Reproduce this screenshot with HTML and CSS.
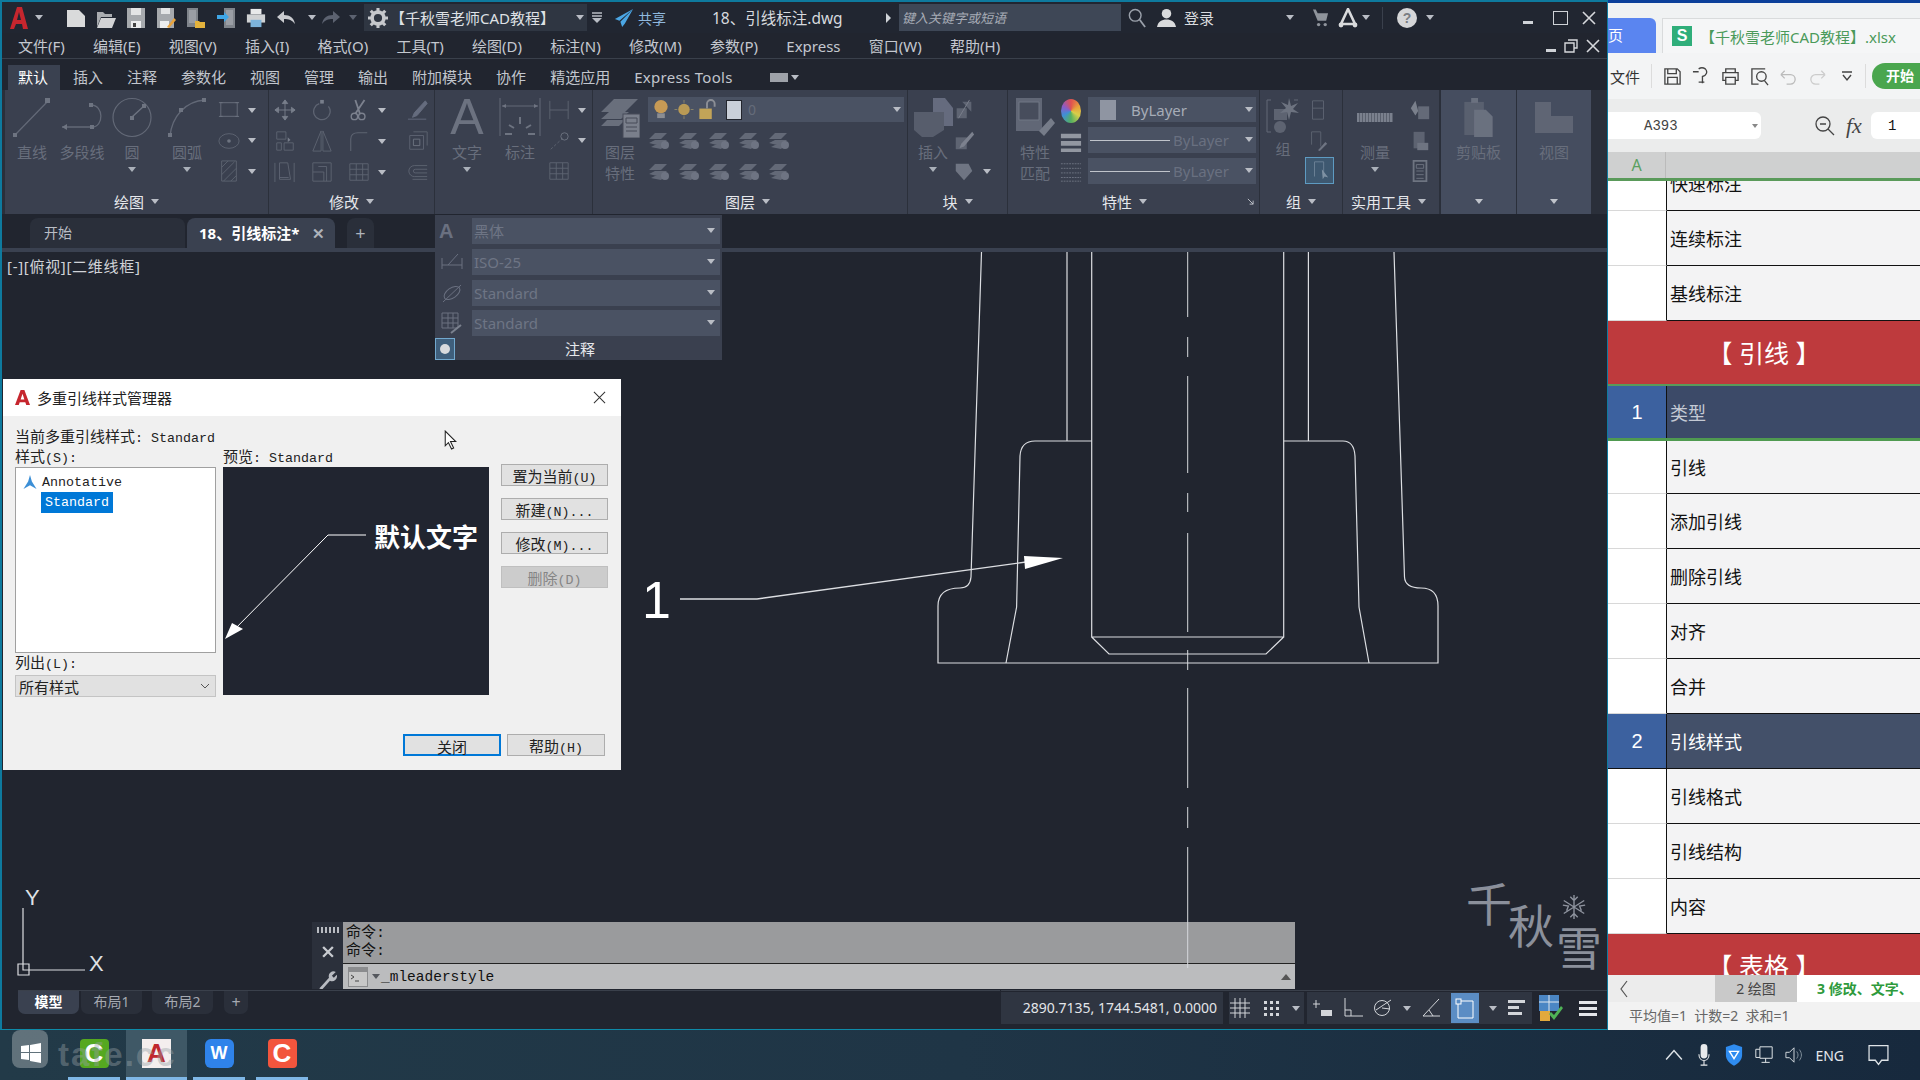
FILE: index.html
```html
<!DOCTYPE html>
<html lang="zh-CN">
<head>
<meta charset="utf-8">
<title>AutoCAD</title>
<link rel="stylesheet" href="styles.css">
</head>
<body>
<svg class="defs" width="0" height="0">
  <symbol id="lay" viewBox="0 0 24 24"><path d="M2 12 8 6h12l-6 6zM2 16l6-3h12l-6 6zM4 20l4-2h10l-4 4z" fill="#6e7482"/><circle cx="18" cy="18" r="4" fill="#7c8290"/></symbol>
  <symbol id="grid" viewBox="0 0 24 24"><path d="M2 3h20v18H2zM2 9h20M2 15h20M9 3v18M16 3v18" fill="none" stroke="#676d7b"/></symbol>
  <symbol id="rect" viewBox="0 0 24 24"><path d="M3 4h18v15H3z" fill="none" stroke="#676d7b" stroke-width="1.3"/><path d="M1 4h4M19 4h4M1 19h4M19 19h4" stroke="#7b818e"/></symbol>
</svg>
<div class="screen">
  <div class="windows">
    <section class="cad">
      <header class="titlebar">
        <svg class="i20 logo" viewBox="0 0 20 24"><path d="M1 23 8 1h5l6 22h-5l-1-5H7l-2 5zM8 14h4l-2-8z" fill="#c6262e"/></svg>
        <i class="caret c-a"></i>
        <svg class="i20 qfirst" viewBox="0 0 20 22"><path d="M1 3h12l6 6v11H1z" fill="#d9dadb"/></svg>
        <svg class="i20 q" viewBox="0 0 20 22"><path d="M1 5h6l2 2h7v3H5l-4 10z" fill="#a9acb0"/><path d="M5 11h15l-4 10H1z" fill="#d2d3d5"/></svg>
        <svg class="i20 q" viewBox="0 0 20 22"><path d="M1 1h18v20H1z" fill="#a6a9ad"/><path d="M5 1h10v7H5z" fill="#e3e4e5"/><path d="M5 14h10v7H5z" fill="#ecedee"/><path d="M7 16h3v4H7z" fill="#444"/></svg>
        <svg class="i20 q" viewBox="0 0 20 22"><path d="M1 1h17v20H1z" fill="#a6a9ad"/><path d="M5 1h9v6H5z" fill="#e3e4e5"/><path d="M4 14h9v7H4z" fill="#ecedee"/><path d="m11 20 7-9 2 2-7 8z" fill="#e8a33c"/></svg>
        <svg class="i20 q" viewBox="0 0 20 22"><path d="M1 1h11v19H1z" fill="#7f848b"/><path d="M3 3h7v13H3z" fill="#9a9ea5"/><path d="M9 14h4l1 1h5v6H9z" fill="#e3b23c"/></svg>
        <svg class="i20 q" viewBox="0 0 20 22"><path d="M8 1h11v20H8z" fill="#7f848b"/><path d="M10 3h7v15h-7z" fill="#9a9ea5"/><path d="M1 8h7V5l5 5-5 5v-3H1z" fill="#3fa6e6"/></svg>
        <svg class="i20 q" viewBox="0 0 22 22"><path d="M5 1h12v6H5z" fill="#e8e9ea"/><path d="M1 7h20v9H1z" fill="#cfd1d3"/><path d="M5 13h12v8H5z" fill="#7db3da"/></svg>
        <svg class="i20 q" viewBox="0 0 20 14"><path d="M1 6 8 0v4c6 0 10 3 11 9-3-4-6-5-11-5v4z" fill="#c9cbcf"/></svg>
        <i class="caret c-b"></i>
        <svg class="i20 redo" viewBox="0 0 20 14"><path d="M19 6 12 0v4C6 4 2 7 1 13c3-4 6-5 11-5v4z" fill="#5c6270"/></svg>
        <i class="caret c-c dim"></i>
        <div class="workspace">
          <svg class="gear" viewBox="0 0 22 22"><circle cx="11" cy="11" r="6.5" fill="none" stroke="#c6c8cc" stroke-width="4"/><path d="M11 0v5M11 17v5M0 11h5M17 11h5M3 3l3 3M16 16l3 3M3 19l3-3M16 6l3-3" stroke="#c6c8cc" stroke-width="3.4"/></svg>
          <span class="ws-text">【千秋雪老师CAD教程】</span>
          <i class="caret ws-caret"></i>
        </div>
        <svg class="eqcaret" viewBox="0 0 10 12"><path d="M0 1h10M0 4h10" stroke="#b8bcc4" stroke-width="1.4"/><path d="M0 6h10L5 11z" fill="#b8bcc4"/></svg>
        <svg class="share" viewBox="0 0 22 22"><path d="M21 1 1 12l5 2zM21 1 7 15l2 6 3-4z" fill="#4ba6e4"/></svg>
        <span class="share-text">共享</span>
        <span class="doc-title">18、引线标注.dwg</span>
        <i class="tri-right"></i>
        <div class="search"><em>键入关键字或短语</em></div>
        <svg class="mag" viewBox="0 0 20 22"><circle cx="8" cy="8" r="6.5" fill="none" stroke="#9aa0aa" stroke-width="1.6"/><path d="m13 13 6 8" stroke="#9aa0aa" stroke-width="2"/></svg>
        <svg class="person" viewBox="0 0 20 20"><circle cx="10" cy="6" r="5" fill="#d9dadc"/><path d="M0 20c1-6 5-8 10-8s9 2 10 8z" fill="#d9dadc"/></svg>
        <span class="login">登录</span>
        <i class="caret c-d"></i>
        <svg class="cart" viewBox="0 0 18 20"><path d="M1 1h3l2 4h11l-2 8H6z" fill="#8f949c"/><circle cx="7" cy="17" r="1.8" fill="#8f949c"/><circle cx="14" cy="17" r="1.8" fill="#8f949c"/></svg>
        <svg class="a360" viewBox="0 0 20 20"><path d="M10 1 3 16h14zM10 1v3" fill="none" stroke="#d9dadc" stroke-width="2.6"/><circle cx="3" cy="17" r="2.4" fill="#d9dadc"/><circle cx="17" cy="17" r="2.4" fill="#d9dadc"/></svg>
        <i class="caret c-e"></i>
        <i class="vsep"></i>
        <svg class="help" viewBox="0 0 20 20"><circle cx="10" cy="10" r="10" fill="#d5d6d8"/><text x="10" y="15" text-anchor="middle" class="help-q">?</text></svg>
        <i class="caret c-f"></i>
        <div class="winbtns">
          <i class="w-min"></i><i class="w-max"></i>
          <svg class="w-x" viewBox="0 0 14 14"><path d="m1 1 12 12M13 1 1 13" stroke="#d6d8dc" stroke-width="1.6"/></svg>
        </div>
      </header>

      <nav class="menubar">
        <span>文件(F)</span><span>编辑(E)</span><span>视图(V)</span><span>插入(I)</span><span>格式(O)</span><span>工具(T)</span><span>绘图(D)</span><span>标注(N)</span><span>修改(M)</span><span>参数(P)</span><span>Express</span><span>窗口(W)</span><span>帮助(H)</span>
        <div class="docbtns">
          <i class="w-min"></i>
          <svg class="w-res" viewBox="0 0 14 14"><path d="M4 1h9v8h-3M1 4h9v9H1z" fill="none" stroke="#d6d8dc" stroke-width="1.4"/></svg>
          <svg class="w-x" viewBox="0 0 14 14"><path d="m1 1 12 12M13 1 1 13" stroke="#d6d8dc" stroke-width="1.6"/></svg>
        </div>
      </nav>

      <nav class="ribbon-tabs">
        <span class="rtab active">默认</span><span class="rtab">插入</span><span class="rtab">注释</span><span class="rtab">参数化</span><span class="rtab">视图</span><span class="rtab">管理</span><span class="rtab">输出</span><span class="rtab">附加模块</span><span class="rtab">协作</span><span class="rtab">精选应用</span><span class="rtab">Express Tools</span>
        <span class="rtab-ext"><i></i><i class="caret"></i></span>
      </nav>

      <div class="ribbon">
        <div class="panel p-draw">
          <div class="pbody">
            <div class="tool w40"><svg class="big" viewBox="0 0 40 41"><path d="M3 38 36 4" stroke="#6d7381" stroke-width="1.3"/><rect x="33" y="1" width="5" height="5" fill="#7b818e"/><rect x="1" y="36" width="4" height="4" fill="#7b818e"/></svg><span class="tl">直线</span></div>
            <div class="tool w44 gap8"><svg class="big" viewBox="0 0 44 41"><path d="M2 30h30c12 0 12-22-1-22" fill="none" stroke="#6d7381" stroke-width="1.3"/><path d="m2 30 5-3v6z" fill="#7b818e"/><rect x="29" y="6" width="4" height="4" fill="#7b818e"/><rect x="30" y="28" width="4" height="4" fill="#7b818e"/></svg><span class="tl">多段线</span></div>
            <div class="tool w40 gap8"><svg class="big" viewBox="0 0 40 41"><circle cx="20" cy="20.500" r="19" fill="none" stroke="#6d7381" stroke-width="1.2"/><path d="M20 20 32 9" stroke="#7b818e" stroke-width="1.4"/><rect x="18" y="19" width="4" height="4" fill="#7b818e"/><rect x="30" y="7" width="4" height="4" fill="#7b818e"/></svg><span class="tl">圆</span><i class="caret tcar"></i></div>
            <div class="tool w40 gap15"><svg class="big" viewBox="0 0 40 41"><path d="M3 39C5 20 18 4 38 3" fill="none" stroke="#6d7381" stroke-width="1.3"/><rect x="1" y="36" width="4" height="4" fill="#7b818e"/><rect x="12" y="11" width="4" height="4" fill="#7b818e"/><rect x="35" y="1" width="4" height="4" fill="#7b818e"/></svg><span class="tl">圆弧</span><i class="caret tcar"></i></div>
            <div class="small-col gap11">
              <div class="srow"><svg class="sm" viewBox="0 0 24 24"><use href="#rect"/></svg><i class="caret"></i></div>
              <div class="srow"><svg class="sm" viewBox="0 0 24 24"><ellipse cx="12" cy="12" rx="11" ry="8" fill="none" stroke="#676d7b"/><circle cx="12" cy="12" r="2" fill="#7b818e"/></svg><i class="caret"></i></div>
              <div class="srow"><svg class="sm" viewBox="0 0 24 24"><path d="M4 1v22h16V1zM4 8l7-7M4 16 18 2M6 23 20 9M14 23l6-6" fill="none" stroke="#676d7b"/></svg><i class="caret"></i></div>
            </div>
          </div>
          <div class="plabel">绘图<i class="caret"></i></div>
        </div>

        <div class="panel p-mod">
          <div class="pbody">
            <div class="mod-grid">
              <svg class="sm" viewBox="0 0 24 24"><path d="M12 1v22M1 12h22M12 1 9 5h6zM12 23l-3-4h6zM1 12l4-3v6zM23 12l-4-3v6z" fill="#888e9a" stroke="#888e9a"/></svg>
              <svg class="sm" viewBox="0 0 24 24"><path d="M9 5a9 9 0 1 0 10 3" fill="none" stroke="#676d7b" stroke-width="1.4"/><rect x="10" y="1" width="4" height="4" fill="#888e9a"/></svg>
              <span class="mrow"><svg class="sm" viewBox="0 0 24 24"><path d="M8 1l5 15M18 1 8 16" stroke="#8d929e" stroke-width="2"/><circle cx="7" cy="19" r="3.500" fill="none" stroke="#8d929e" stroke-width="1.5"/><circle cx="15" cy="19" r="3.500" fill="none" stroke="#8d929e" stroke-width="1.5"/></svg><i class="caret"></i></span>
              <svg class="sm" viewBox="0 0 24 24"><path d="M20 2 8 15l-2 5 5-2L22 5zM1 22h20" fill="#70778a" stroke="#70778a"/></svg>
              <svg class="sm" viewBox="0 0 24 24"><path d="M3 2h10v8H3zM11 14h10v8H11zM3 14h5v8H3z" fill="none" stroke="#676d7b"/><path d="m15 8 3 3-3 2z" fill="#888e9a"/></svg>
              <svg class="sm" viewBox="0 0 24 24"><path d="M11 1v22H2zM13 1v22h9z" fill="none" stroke="#676d7b"/></svg>
              <span class="mrow"><svg class="sm" viewBox="0 0 24 24"><path d="M3 23V10Q3 3 11 3h10" fill="none" stroke="#676d7b" stroke-width="1.2"/></svg><i class="caret"></i></span>
              <svg class="sm" viewBox="0 0 24 24"><path d="M3 6h15v15H3zM7 2h15v15" fill="none" stroke="#676d7b"/><path d="M7 10h7v7H7z" fill="none" stroke="#7b818e"/></svg>
              <svg class="sm" viewBox="0 0 24 24"><path d="M1 2v21M22 2v21M6 2h9l3 18H6zM6 18h10" fill="none" stroke="#676d7b"/></svg>
              <svg class="sm" viewBox="0 0 24 24"><path d="M2 2h20v20H2zM2 12h12v10M8 6h9v16" fill="none" stroke="#676d7b"/></svg>
              <span class="mrow"><svg class="sm" viewBox="0 0 24 24"><use href="#grid"/></svg><i class="caret"></i></span>
              <svg class="sm" viewBox="0 0 24 24"><path d="M22 5H8a5 5 0 0 0 0 12h14M22 9H9a2 2 0 0 0 0 4h13M22 20H6" fill="none" stroke="#676d7b"/></svg>
            </div>
          </div>
          <div class="plabel">修改<i class="caret"></i></div>
        </div>

        <div class="panel p-ann">
          <div class="pbody">
            <div class="tool w34 gap-a"><span class="big-a">A</span><span class="tl">文字</span><i class="caret tcar"></i></div>
            <div class="tool w42 gap-b"><svg class="big" viewBox="0 0 42 41"><path d="M1 1v38M41 1v38M3 9h36" fill="none" stroke="#6d7381"/><path d="M3 9l4-2v4zM39 9l-4-2v4z" fill="#7b818e"/><path d="M21 20v7M10 28l5 3M32 28l-5 3M6 37h7M29 37h7" stroke="#7b818e" stroke-width="2"/></svg><span class="tl">标注</span></div>
            <div class="small-col gap7">
              <div class="srow"><svg class="sm" viewBox="0 0 24 24"><path d="M2 2v20M22 2v20M2 12h20" stroke="#676d7b" fill="none"/></svg><i class="caret"></i></div>
              <div class="srow"><svg class="sm" viewBox="0 0 24 24"><path d="M3 21 16 9" stroke="#676d7b" stroke-dasharray="3 2"/><circle cx="18" cy="7" r="4" fill="none" stroke="#7b818e"/></svg><i class="caret"></i></div>
              <div class="srow"><svg class="sm" viewBox="0 0 24 24"><use href="#grid"/></svg></div>
            </div>
          </div>
        </div>

        <div class="panel p-lay">
          <div class="pbody">
            <div class="tool w40 gap7"><svg class="big" viewBox="0 0 40 41"><path d="M1 15 14 2h24L25 15zM1 22l8-7h20l-8 7zM1 29l6-6h18l-6 6z" fill="#757b88"/><rect x="23" y="17" width="17" height="24" fill="#8a8f9a" stroke="#4a4f5b"/><path d="M26 21h11v5H26zM26 30h11M26 34h11" fill="none" stroke="#4a4f5b"/></svg><span class="tl">图层</span><span class="tl tl2">特性</span></div>
            <div class="lay-main">
              <div class="combo layer-combo">
                <svg class="lay-i" viewBox="0 0 20 22"><circle cx="10" cy="8" r="7" fill="#c79a55"/><path d="M6 15h8v5H6z" fill="#8b8d93"/></svg>
                <svg class="lay-i" viewBox="0 0 20 22"><circle cx="10" cy="11" r="6" fill="#b99a55"/><path d="M0 11h3M17 11h3M10 1v3M10 18v3" stroke="#8c8468"/></svg>
                <svg class="lay-i" viewBox="0 0 20 22"><path d="M2 10h13v11H2z" fill="#c2a458"/><path d="M10 10V5a4 4 0 0 1 8 0v3" fill="none" stroke="#8c8f96" stroke-width="2"/></svg>
                <i class="swatch"></i>
                <span class="zero">0</span>
                <i class="caret combo-car"></i>
              </div>
              <div class="lay-row">
                <svg class="lay-s" viewBox="0 0 24 24"><use href="#lay"/></svg><svg class="lay-s" viewBox="0 0 24 24"><use href="#lay"/></svg><svg class="lay-s" viewBox="0 0 24 24"><use href="#lay"/></svg><svg class="lay-s" viewBox="0 0 24 24"><use href="#lay"/></svg><svg class="lay-s" viewBox="0 0 24 24"><use href="#lay"/></svg>
              </div>
              <div class="lay-row">
                <svg class="lay-s" viewBox="0 0 24 24"><use href="#lay"/></svg><svg class="lay-s" viewBox="0 0 24 24"><use href="#lay"/></svg><svg class="lay-s" viewBox="0 0 24 24"><use href="#lay"/></svg><svg class="lay-s" viewBox="0 0 24 24"><use href="#lay"/></svg><svg class="lay-s" viewBox="0 0 24 24"><use href="#lay"/></svg>
              </div>
            </div>
          </div>
          <div class="plabel pl-lay">图层<i class="caret"></i></div>
        </div>

        <div class="panel p-blk">
          <div class="pbody">
            <div class="tool w40 gap5"><svg class="big" viewBox="0 0 40 41"><path d="M20 1h12l8 10v18H20z" fill="#70768a"/><path d="M1 15h30v18l-11 7H9L1 33z" fill="#5f6574"/></svg><span class="tl">插入</span><i class="caret tcar"></i></div>
            <div class="small-col gap7">
              <div class="srow"><svg class="sm" viewBox="0 0 24 24"><path d="M4 10h11v11H4zM10 3h10v11" fill="#676d7b"/><path d="M18 1 6 21" stroke="#8d929e"/></svg></div>
              <div class="srow"><svg class="sm" viewBox="0 0 24 24"><path d="M3 8h12v13H3z" fill="#676d7b"/><path d="M21 2 9 15l-2 5 5-2L23 5z" fill="#8d929e"/></svg></div>
              <div class="srow"><svg class="sm" viewBox="0 0 24 24"><path d="M3 4h14l4 8-9 10-9-10z" fill="#7d8390"/></svg><i class="caret"></i></div>
            </div>
          </div>
          <div class="plabel">块<i class="caret"></i></div>
        </div>

        <div class="panel p-prop">
          <div class="pbody">
            <div class="tool w40 gap7"><svg class="big" viewBox="0 0 40 41"><path d="M1 1h26v33H1z" fill="#6b7180"/><path d="M4 5h20v18H4z" fill="#4b5160" stroke="#7f8592"/><path d="m24 34 12-13 4 5-11 13z" fill="#858b98"/></svg><span class="tl">特性</span><span class="tl tl2">匹配</span></div>
            <div class="wheels">
              <i class="wheel"></i>
              <svg class="sm" viewBox="0 0 24 24"><path d="M1 3h22v5H1zM1 11h22v5H1zM1 19h22v4H1z" fill="#a8adb6"/></svg>
              <svg class="sm" viewBox="0 0 24 24"><path d="M1 3h22M1 8h22M1 13h22M1 18h22M1 22h22" stroke="#7d8390" stroke-dasharray="2 1"/></svg>
            </div>
            <div class="prop-combos">
              <div class="combo c25"><i class="swatch sw-gray"></i><span class="bylayer lit">ByLayer</span><i class="caret combo-car"></i></div>
              <div class="combo c26"><i class="pline"></i><span class="bylayer">ByLayer</span><i class="caret combo-car"></i></div>
              <div class="combo c26"><i class="pline"></i><span class="bylayer">ByLayer</span><i class="caret combo-car"></i></div>
            </div>
          </div>
          <div class="plabel pl-prop">特性<i class="caret"></i><svg class="launch" viewBox="0 0 8 8"><path d="M1 1l6 6M7 3v4H3" stroke="#c8ccd2" fill="none"/></svg></div>
        </div>

        <div class="panel p-grp">
          <div class="pbody">
            <div class="tool w34 gap6"><svg class="big grpi" viewBox="0 0 34 38"><path d="M5 3H1v32h4M28 3h4" fill="none" stroke="#6d7381"/><path d="M8 12h13v11H8z" fill="#666c7a"/><path d="M23 1l2 8 7-3-5 6 6 4-8-1-2 8-2-8-7 1 6-5-5-6 7 3z" fill="#7a808d"/><circle cx="14" cy="30" r="6" fill="#666c7a"/></svg><span class="tl">组</span></div>
            <div class="small-col gap2">
              <div class="srow"><svg class="sm" viewBox="0 0 24 24"><path d="M6 2h12v20H6zM6 10h12" fill="none" stroke="#676d7b"/></svg></div>
              <div class="srow"><svg class="sm" viewBox="0 0 24 24"><path d="M5 2h10v16M5 2v14" fill="none" stroke="#676d7b"/><path d="m12 22 8-9 2 2-8 8z" fill="#7d8390"/></svg></div>
              <div class="srow grp-active"><svg class="sm" viewBox="0 0 24 24"><path d="M6 2h10v16M6 2v16" fill="none" stroke="#7a8ea2"/><path d="m14 10 1 11 2-3 4 1z" fill="#8fa0b0"/></svg></div>
            </div>
          </div>
          <div class="plabel">组<i class="caret"></i></div>
        </div>

        <div class="panel p-utl">
          <div class="pbody">
            <div class="tool w40 gap13"><i class="ruler"></i><span class="tl tl-ruler">测量</span><i class="caret tcar"></i></div>
            <div class="small-col gap16">
              <div class="srow"><svg class="sm" viewBox="0 0 24 24"><path d="M10 8h12v14H10z" fill="#6f7583"/><path d="m7 2-5 8 5 8 3-5z" fill="#8a909c"/></svg></div>
              <div class="srow"><svg class="sm" viewBox="0 0 24 24"><path d="M5 2h12v18H5z" fill="#666c7a"/><path d="M9 14h12v8H9z" fill="#7b818e"/></svg></div>
              <div class="srow"><svg class="sm" viewBox="0 0 24 24"><path d="M5 1h14v22H5z" fill="none" stroke="#7b818e" stroke-width="2"/><path d="M8 5h8v4H8zM8 12h8M8 16h8M8 20h8" stroke="#7b818e" fill="none"/></svg></div>
            </div>
          </div>
          <div class="plabel pl-utl">实用工具<i class="caret"></i></div>
        </div>

        <div class="panel p-clip lit-panel">
          <div class="pbody center">
            <div class="tool"><svg class="big clipi" viewBox="0 0 32 42"><path d="M2 5h20v34H2z" fill="#5f6574"/><path d="M9 1h7v5H9z" fill="#747a88"/><path d="M12 13h12l7 7v21H12z" fill="#747a88"/></svg><span class="tl">剪贴板</span></div>
          </div>
          <div class="plabel"><i class="caret solo"></i></div>
        </div>
        <div class="panel p-view lit-panel">
          <div class="pbody center">
            <div class="tool"><svg class="big viewi" viewBox="0 0 40 32"><path d="M1 1h16v14h22v17H1z" fill="#666c7a"/></svg><span class="tl tl-view">视图</span></div>
          </div>
          <div class="plabel"><i class="caret solo"></i></div>
        </div>
      </div>

      <div class="filetabs">
        <span class="ftab">开始</span>
        <span class="ftab current">18、引线标注*<b>✕</b></span>
        <span class="ftab plus">+</span>
      </div>

      <div class="popout">
        <div class="pop-row"><span class="pop-ic pop-a">A</span><div class="pop-box">黑体<i class="caret"></i></div></div>
        <div class="pop-row"><svg class="pop-ic" viewBox="0 0 22 22"><path d="M1 7v11M21 7v11M1 14h20M17 3 7 14" stroke="#6a7080" fill="none"/></svg><div class="pop-box">ISO-25<i class="caret"></i></div></div>
        <div class="pop-row"><svg class="pop-ic" viewBox="0 0 22 22"><ellipse cx="11" cy="11" rx="9" ry="5" fill="none" stroke="#6a7080" transform="rotate(-35 11 11)"/><path d="M2 20 20 3" stroke="#6a7080"/></svg><div class="pop-box">Standard<i class="caret"></i></div></div>
        <div class="pop-row"><svg class="pop-ic" viewBox="0 0 22 22"><path d="M1 1h16v15H1zM1 6h16M1 11h16M7 1v15M12 1v15" stroke="#6a7080" fill="none"/><path d="m10 21 10-8" stroke="#7b818e" stroke-width="2"/></svg><div class="pop-box">Standard<i class="caret"></i></div></div>
        <div class="pop-foot"><span class="pin"><i></i></span><span class="pop-label">注释</span></div>
      </div>

      <main class="canvas">
        <div class="viewlabel">[-][俯视][二维线框]</div>

        <div class="cmd">
          <div class="cmd-grip">
            <i class="dots"></i>
            <svg class="cmd-x" viewBox="0 0 12 12"><path d="m1 1 10 10M11 1 1 11" stroke="#c8cbd0" stroke-width="2.4"/></svg>
            <svg class="cmd-w" viewBox="0 0 20 20"><path d="M1 19 11 8a5 5 0 0 1 7-6l-4 4 2 2 3-3a5 5 0 0 1-7 6L4 20z" fill="#b8bbc1"/></svg>
          </div>
          <div class="cmd-main">
            <div class="cmd-log"><div>命令:</div><div>命令:</div></div>
            <div class="cmd-input">
              <svg class="cmd-ic" viewBox="0 0 20 20"><path d="M0 0h20v20H0z" fill="#8b8c8e"/><path d="M1 5h18v14H1z" fill="#c8c8c8"/><path d="m3 8 3 2-3 2M7 14h4" stroke="#444" fill="none"/></svg>
              <i class="caret cmd-car"></i>
              <span>_mleaderstyle</span>
              <i class="cmd-up"></i>
            </div>
          </div>
        </div>

        <svg class="drawing" viewBox="0 0 1608 1030">
          <g fill="none" stroke="#dcdee2" stroke-width="1.2">
            <path d="M981.500 252 971 577Q970 588 960 588 938 588 938 606V663H1438V606Q1438 588 1421 588 1405 588 1404.500 577L1394 252"/>
            <path d="M1091.700 441H1035Q1021 441 1020 456L1016.600 607 1006 663"/>
            <path d="M1283.700 441H1343Q1354 441 1355 456L1359 607 1369 663"/>
            <path d="M1091.700 252V637H1283.700V252M1091.700 637 1109 654H1266L1283.700 637M1067 252V441M1308.400 252V441"/>
            <path d="M1187.700 252V317M1187.700 337V357M1187.700 376V473M1187.700 493V512M1187.700 533V632M1187.700 650V670M1187.700 688V788M1187.700 807V828M1187.700 847V968" stroke="#d6d8dc" stroke-width="1"/>
            <path d="M680 599H757L1026 562" stroke-width="1.4"/>
            <path d="M23 908V970H85M18 964H29V975H18z"/>
          </g>
          <path d="M1024 556 1063 558 1025 569z" fill="#fff"/>
          <text x="642" y="618" class="draw-one">1</text>
          <text x="25" y="905" class="ucs">Y</text>
          <text x="89" y="971" class="ucs">X</text>
        </svg>

        <div class="watermark">
          <span>千</span><span>秋</span><span>雪</span>
          <svg class="flake" viewBox="0 0 28 28"><path d="M14 1v26M3 7l22 14M25 7 3 21M10 3l4 4 4-4M10 25l4-4 4 4M2 12l6 1-2 5M26 12l-6 1 2 5" stroke="#8e939e" stroke-width="1.5" fill="none"/></svg>
        </div>

        <div class="dialog">
          <div class="dlg-title">
            <svg class="dlg-logo" viewBox="0 0 16 16"><path d="M0 16 6 0h4l6 16h-4l-1-3H5l-1 3zM6 10h4L8 4z" fill="#c6262e"/></svg>
            <span class="dlg-name">多重引线样式管理器</span>
            <svg class="dlg-x" viewBox="0 0 14 14"><path d="m1 1 12 12M13 1 1 13" stroke="#333" stroke-width="1.1"/></svg>
          </div>
          <div class="dlg-body">
            <div class="dlg-current"><span class="cn">当前多重引线样式</span>: Standard</div>
            <div class="dlg-main">
              <div class="dlg-left">
                <div class="dlg-cap"><span class="cn">样式</span>(S):</div>
                <div class="listbox">
                  <div class="li"><svg class="anno" viewBox="0 0 14 16"><path d="M7 0 9 7l5 8-7-4-7 4 5-8z" fill="#3c8fd6"/></svg><span>Annotative</span></div>
                  <div class="li sel"><span>Standard</span></div>
                </div>
                <div class="dlg-cap cap-list"><span class="cn">列出</span>(L):</div>
                <div class="select"><span class="cn">所有样式</span><svg class="chev" viewBox="0 0 10 6"><path d="m1 1 4 4 4-4" fill="none" stroke="#555"/></svg></div>
              </div>
              <div class="dlg-mid">
                <div class="dlg-cap"><span class="cn">预览</span>: Standard</div>
                <div class="preview">
                  <svg class="pv-svg" viewBox="0 0 266 228"><path d="M143 68H105L3 171" fill="none" stroke="#fff" stroke-width="1"/><path d="M2 172 9 156 20 162z" fill="#fff"/></svg>
                  <span class="pv-text">默认文字</span>
                </div>
              </div>
              <div class="dlg-right">
                <button class="btn"><span class="cn">置为当前</span>(U)</button>
                <button class="btn"><span class="cn">新建</span>(N)...</button>
                <button class="btn"><span class="cn">修改</span>(M)...</button>
                <button class="btn off"><span class="cn">删除</span>(D)</button>
              </div>
            </div>
            <div class="dlg-foot">
              <button class="btn2 primary"><span class="cn">关闭</span></button>
              <button class="btn2"><span class="cn">帮助</span>(H)</button>
            </div>
          </div>
        </div>

        <svg class="cursor" viewBox="0 0 12 19"><path d="M1 1v14l3-3 3 6 2-1-3-6h5z" fill="#fff" stroke="#222" stroke-width="1"/></svg>
      </main>

      <footer class="bottombar">
        <div class="layouts">
          <span class="ltab on">模型</span><span class="ltab">布局1</span><span class="ltab">布局2</span><span class="ltab add">+</span>
        </div>
        <div class="status">
          <span class="coords">2890.7135, 1744.5481, 0.0000</span>
          <div class="sgroup sg1">
            <svg class="st" viewBox="0 0 20 20"><path d="M5 0v20M10 0v20M15 0v20M0 5h20M0 10h20M0 15h20" stroke="#d3d6da"/></svg>
            <svg class="st" viewBox="0 0 20 20"><path d="M3 3h3v3H3zM9 3h3v3H9zM15 3h3v3h-3zM3 9h3v3H3zM9 9h3v3H9zM15 9h3v3h-3zM3 15h3v3H3zM9 15h3v3H9zM15 15h3v3h-3z" fill="#d3d6da"/></svg>
            <i class="caret"></i>
          </div>
          <div class="sgroup sg2">
            <svg class="st" viewBox="0 0 20 20"><path d="M3 2v8M0 6h7" stroke="#d3d6da"/><path d="M8 12h11v6H8z" fill="#d3d6da"/></svg>
            <svg class="st" viewBox="0 0 20 20"><path d="M2 0v18h18M2 12h6v6" fill="none" stroke="#d3d6da"/></svg>
            <svg class="st" viewBox="0 0 20 20"><circle cx="9" cy="10" r="7.500" fill="none" stroke="#d3d6da"/><path d="M3 12 18 2M9 10l8 1" stroke="#d3d6da"/></svg>
            <i class="caret"></i>
            <svg class="st" viewBox="0 0 20 20"><path d="M18 1 2 18h17M8 12l4 6" fill="none" stroke="#d3d6da"/></svg>
            <span class="st-active"><svg class="st" viewBox="0 0 20 24"><path d="M3 5h15v17H3z" fill="none" stroke="#fff"/><rect x="1" y="3" width="5" height="5" fill="#5b8dc4" stroke="#fff"/></svg></span>
            <i class="caret"></i>
            <svg class="st" viewBox="0 0 20 20"><path d="M1 2h17v3H1zM1 8h11v3H1zM1 14h14v3H1z" fill="#d3d6da"/></svg>
          </div>
          <svg class="st globe" viewBox="0 0 26 30"><path d="M1 2h20v16H1z" fill="#4b86c4"/><path d="M11 2v26M1 9h20" stroke="#dfe6ee"/><path d="M2 18h10v10H2z" fill="#e2a93c"/><path d="m11 21 5 6 9-12-2-2-7 9-3-3z" fill="#4fb256"/></svg>
          <svg class="st st-menu" viewBox="0 0 20 20"><path d="M1 3h18v3H1zM1 9h18v3H1zM1 15h18v3H1z" fill="#e4e6ea"/></svg>
        </div>
      </footer>
    </section>

    <section class="sheet">
      <div class="x-tabs">
        <span class="x-home">页</span>
        <div class="x-file">
          <span class="x-s">S</span>
          <span class="x-name">【千秋雪老师CAD教程】.xlsx</span>
        </div>
      </div>
      <div class="x-tools">
        <span class="x-filemenu">文件</span>
        <i class="x-sep"></i>
        <svg class="x-ic" viewBox="0 0 20 20"><path d="M2 2h13l3 3v13H2zM5 2v5h9V2M5 18v-7h10v7" fill="none" stroke="#444" stroke-width="1.4"/></svg>
        <svg class="x-ic" viewBox="0 0 20 20"><path d="M1 5h6M7 2a6 6 0 0 1 7 0c3 3 1 7-3 8v7M7 16h6" fill="none" stroke="#444" stroke-width="1.4"/></svg>
        <svg class="x-ic" viewBox="0 0 20 20"><path d="M5 6V2h10v4M5 14H2V6h16v8h-3M5 11h10v7H5z" fill="none" stroke="#444" stroke-width="1.4"/></svg>
        <svg class="x-ic" viewBox="0 0 20 20"><path d="M16 2H2v16h7" fill="none" stroke="#444" stroke-width="1.4"/><circle cx="12" cy="10" r="5" fill="none" stroke="#444" stroke-width="1.4"/><path d="m15 14 4 5" stroke="#444" stroke-width="1.4"/></svg>
        <svg class="x-ic" viewBox="0 0 20 20"><path d="M2 8h10a5 5 0 0 1 0 10H8M2 8l4-4M2 8l4 4" fill="none" stroke="#bbb" stroke-width="1.4"/></svg>
        <svg class="x-ic" viewBox="0 0 20 20"><path d="M18 8H8a5 5 0 0 0 0 10h4M18 8l-4-4M18 8l-4 4" fill="none" stroke="#ccc" stroke-width="1.4"/></svg>
        <svg class="x-down" viewBox="0 0 12 12"><path d="M1 2h10M2 5l4 5 4-5" fill="none" stroke="#444" stroke-width="1.4"/></svg>
        <i class="x-sep sep2"></i>
        <span class="x-start">开始</span>
      </div>
      <div class="x-formula">
        <div class="x-namebox"><span>A393</span><i></i></div>
        <svg class="x-zoom" viewBox="0 0 20 20"><circle cx="8" cy="8" r="7" fill="none" stroke="#444" stroke-width="1.3"/><path d="M5 8h6M13 13l6 6" stroke="#444" stroke-width="1.3"/></svg>
        <em class="x-fx">fx</em>
        <div class="x-input">1</div>
      </div>
      <div class="x-colhead"><span>A</span></div>
      <div class="x-rows">
        <div class="xrow xrow-top"><i></i><span>快速标注</span></div>
        <div class="xrow"><i></i><span>连续标注</span></div>
        <div class="xrow"><i></i><span>基线标注</span></div>
        <div class="xred">【&nbsp;引线&nbsp;】</div>
        <div class="xrow navy type"><i>1</i><span>类型</span></div>
        <div class="xrow short"><i></i><span>引线</span></div>
        <div class="xrow"><i></i><span>添加引线</span></div>
        <div class="xrow"><i></i><span>删除引线</span></div>
        <div class="xrow"><i></i><span>对齐</span></div>
        <div class="xrow"><i></i><span>合并</span></div>
        <div class="xrow navy"><i>2</i><span>引线样式</span></div>
        <div class="xrow"><i></i><span>引线格式</span></div>
        <div class="xrow"><i></i><span>引线结构</span></div>
        <div class="xrow"><i></i><span>内容</span></div>
        <div class="xred">【&nbsp;表格&nbsp;】</div>
      </div>
      <div class="x-sheets">
        <svg class="x-back" viewBox="0 0 10 18"><path d="M8 1 2 9l6 8" fill="none" stroke="#555" stroke-width="1.2"/></svg>
        <span class="x-st t2">2 绘图</span>
        <span class="x-st t3">3 修改、文字、</span>
      </div>
      <div class="x-status">平均值=1&nbsp; 计数=2&nbsp; 求和=1</div>
    </section>
  </div>

  <footer class="taskbar">
    <div class="wm-box"><svg class="winlogo" viewBox="0 0 20 20"><path d="M0 3l8-1v7H0zM9 2l11-2v9H9zM0 10h8v7l-8-1zM9 10h11v10L9 18z" fill="#fff"/></svg></div>
    <div class="apps">
      <div class="app"><span class="ico ico-green">C</span></div>
      <div class="app active"><span class="ico ico-a">A</span></div>
      <div class="app"><span class="ico ico-w">W</span></div>
      <div class="app"><span class="ico ico-c">C</span></div>
    </div>
    <span class="wm-text">tafe.cc</span>
    <div class="tray">
      <svg class="tr" viewBox="0 0 16 10"><path d="m1 9 7-8 7 8" fill="none" stroke="#dfe4e8" stroke-width="1.3"/></svg>
      <svg class="tr" viewBox="0 0 16 26"><rect x="4" y="0" width="8" height="17" rx="4" fill="#e8eaec"/><path d="M2 12c0 10 12 10 12 0M8 20v5M4 25h8" fill="none" stroke="#e8eaec" stroke-width="1.3"/></svg>
      <svg class="tr" viewBox="0 0 20 24"><path d="M10 0 19 3v9c0 6-5 10-9 12-4-2-9-6-9-12V3z" fill="#2f8cf0"/><path d="M5 8h10l-5 8z" fill="none" stroke="#fff" stroke-width="1.6"/></svg>
      <svg class="tr" viewBox="0 0 22 22"><path d="M6 1h15v14H6zM1 4h5M1 4v10h5M13 15v5M8 20h10" fill="none" stroke="#dfe4e8" stroke-width="1.2"/></svg>
      <svg class="tr" viewBox="0 0 20 20"><path d="M1 7h4l5-5v16l-5-5H1z" fill="none" stroke="#dfe4e8"/><path d="M13 6c2 3 2 5 0 8M16 4c3 4 3 8 0 12" fill="none" stroke="#8a98a4"/></svg>
      <span class="eng">ENG</span>
      <svg class="tr notif" viewBox="0 0 20 20"><path d="M1 1h18v14h-6l-3 4-3-4H1z" fill="none" stroke="#dfe4e8" stroke-width="1.2"/></svg>
    </div>
  </footer>
</div>
</body>
</html>
```

FILE: styles.css
```css
* { box-sizing: border-box; }
html, body { margin: 0; padding: 0; }
body { width: 1920px; height: 1080px; overflow: hidden; background: #1d3242; font-family: "Noto Sans", "Noto Sans CJK SC", sans-serif; font-size: 14px; }
i, em { font-style: normal; }
.defs { position: absolute; }
.screen { display: flex; flex-direction: column; width: 1920px; height: 1080px; }
.windows { display: flex; height: 1030px; }

/* carets */
.caret { display: inline-block; width: 0; height: 0; border-left: 4px solid transparent; border-right: 4px solid transparent; border-top: 5px solid #b9bdc5; flex: none; }
.caret.dim { border-top-color: #5c6270; }

/* CAD window */
.cad { position: relative; width: 1608px; height: 1030px; display: flex; flex-direction: column; background: #21252f; border-top: 2px solid #0e7a9e; border-left: 2px solid #0e7a9e; border-right: 1px solid #0e7a9e; border-bottom: 1px solid #0e8aa8; color: #cdd1d8; }
.titlebar { height: 31px; display: flex; align-items: center; padding-left: 7px; flex: none; background: #212631; }
.i20 { width: 20px; height: 22px; flex: none; }
.logo { height: 24px; }
.c-a { margin-left: 6px; }
.qfirst { margin-left: 23px; }
.q { margin-left: 10px; }
.c-b { margin-left: 12px; }
.redo { margin-left: 5px; }
.c-c { margin-left: 8px; }
.workspace { width: 223px; height: 27px; margin-left: 7px; background: #2f3642; display: flex; align-items: center; padding-left: 4px; }
.gear { width: 20px; height: 20px; flex: none; }
.ws-text { font-size: 15px; margin-left: 2px; color: #dfe1e5; white-space: nowrap; }
.ws-caret { margin-left: auto; margin-right: 3px; }
.eqcaret { width: 10px; height: 12px; margin-left: 5px; flex: none; }
.share { width: 20px; height: 20px; margin-left: 12px; flex: none; }
.share-text { margin-left: 4px; color: #8fb8de; font-size: 14px; white-space: nowrap; }
.doc-title { margin-left: 46px; width: 170px; font-size: 15.500px; color: #d6d9de; white-space: nowrap; }
.tri-right { width: 0; height: 0; border-top: 5px solid transparent; border-bottom: 5px solid transparent; border-left: 5px solid #d0d3d8; margin-left: 4px; flex: none; }
.search { width: 222px; height: 27px; margin-left: 8px; background: #3e4756; display: flex; align-items: center; padding-left: 3px; flex: none; }
.search em { font-style: italic; font-size: 13px; color: #a6abb5; }
.mag { width: 18px; height: 20px; margin-left: 7px; flex: none; }
.person { width: 19px; height: 19px; margin-left: 11px; flex: none; }
.login { margin-left: 8px; color: #d9dbdf; font-size: 15px; white-space: nowrap; }
.c-d { margin-left: 72px; }
.cart { width: 17px; height: 20px; margin-left: 18px; flex: none; }
.a360 { width: 20px; height: 20px; margin-left: 9px; flex: none; }
.c-e { margin-left: 4px; }
.vsep { width: 1px; height: 22px; background: #3a404c; margin-left: 12px; flex: none; }
.help { width: 20px; height: 20px; margin-left: 14px; flex: none; }
.help-q { font: bold 14px "Liberation Sans", sans-serif; fill: #7a7d83; }
.c-f { margin-left: 9px; }
.winbtns { margin-left: 89px; display: flex; align-items: center; gap: 20px; }
.winbtns .w-x { margin-left: -6px; }
.w-min { display: block; width: 10px; height: 3px; background: #cfd2d7; margin-top: 9px; flex: none; }
.w-max { display: block; width: 15px; height: 14px; border: 1.5px solid #cfd2d7; flex: none; }
.w-x { width: 14px; height: 14px; flex: none; }
.w-res { width: 14px; height: 14px; flex: none; }

.menubar { height: 26px; display: flex; align-items: center; gap: 28.300px; padding-left: 16px; border-bottom: 1px solid #3a404b; flex: none; }
.menubar span { font-size: 15px; color: #c4c8cf; white-space: nowrap; }
.docbtns { margin-left: auto; margin-right: 7px; display: flex; align-items: center; gap: 8px; }

.ribbon-tabs { height: 31px; display: flex; align-items: flex-end; padding-left: 6px; flex: none; }
.rtab { height: 25px; line-height: 24px; font-size: 15px; color: #c2c6cd; margin-left: 24px; white-space: nowrap; }
.rtab.active { margin-left: 0; margin-right: -11px; padding: 0 10px; width: 52px; background: #3a4150; color: #fff; }
.rtab:nth-child(11) { letter-spacing: .3px; }
.rtab-ext { display: flex; align-items: center; gap: 3px; height: 25px; margin-left: 37px; }
.rtab-ext i:first-child { display: block; width: 18px; height: 9px; background: #9ea2a9; }

.ribbon { height: 124px; display: flex; padding-left: 3px; flex: none; background: #2a2f3a; }
.panel { display: flex; flex-direction: column; background: #3a404f; border-right: 1px solid #2b303b; flex: none; }
.p-draw { width: 264px; } .p-mod { width: 166px; } .p-ann { width: 158px; } .p-lay { width: 315px; }
.p-blk { width: 100px; } .p-prop { width: 252px; } .p-grp { width: 83px; } .p-utl { width: 97px; }
.p-clip { width: 75px; margin-left: 1px; } .p-view { width: 74px; margin-left: 1px; }
.lit-panel { background: #454d5f; border: 0; }
.panel .big, .panel .sm, .panel .lay-s { opacity: .8; }
.pbody { flex: 1; display: flex; padding: 7px 0 0 7px; min-height: 0; }
.pbody.center { justify-content: center; padding-left: 0; }
.plabel { height: 24px; padding-bottom: 2px; flex: none; display: flex; align-items: center; justify-content: center; gap: 7px; color: #e6e8ec; font-size: 15px; }
.tool { display: flex; flex-direction: column; align-items: center; flex: none; }
.w34 { width: 34px; } .w40 { width: 40px; } .w42 { width: 42px; } .w44 { width: 44px; }
.gap5 { margin-left: -2px; } .gap6 { margin-left: -1px; } .gap7 { margin-left: 0; } .gap8 { margin-left: 8px; } .gap13 { margin-left: 5px; }
.gap15 { margin-left: 15px; } .gap11 { margin-left: 11px; } .gap16 { margin-left: 14px; } .gap2 { margin-left: 7px; }
.big { width: 100%; height: 41px; flex: none; }
.tl { font-size: 15px; line-height: 20px; margin-top: 4px; color: #686e7c; white-space: nowrap; }
.tl2 { margin-top: 1px; }
.tcar { margin-top: 5px; border-top-color: #aab0b9; }
.small-col { display: flex; flex-direction: column; gap: 6.5px; margin-top: 1px; flex: none; }
.srow { display: flex; align-items: center; gap: 8px; height: 24px; }
.sm { width: 22px; height: 22px; flex: none; }

.mod-grid { display: grid; grid-template-columns: 22px 22px 44px 22px; column-gap: 15px; row-gap: 9px; margin-top: 2px; align-content: start; margin-left: -2px; }
.mrow { display: flex; align-items: center; gap: 8px; }
.mod-grid > svg, .mrow { height: 22px; }

.big-a { font: 50px/41px "Liberation Sans", sans-serif; height: 41px; color: #6c7280; }
.gap-a { margin-left: 8px; }
.gap-b { margin-left: 15px; }
.p-ann .small-col { margin-left: 0; }
.p-ann .gap7 { margin-left: 7px; }

.lay-main { margin-left: 8px; display: flex; flex-direction: column; flex: none; }
.combo { display: flex; align-items: center; background: #4a5263; position: relative; }
.layer-combo { width: 256px; height: 25px; padding-left: 3px; gap: 3px; margin-bottom: 1px; }
.lay-i { width: 20px; height: 21px; flex: none; }
.swatch { width: 16px; height: 20px; background: #c9cfd8; border: 1px solid #23262e; margin-left: 6px; flex: none; }
.zero { color: #656c7a; font-size: 14px; margin-left: 3px; }
.combo-car { position: absolute; right: 3px; top: 10px; }
.lay-row { display: flex; gap: 6px; margin-left: -1px; height: 30px; align-items: center; margin-top: 1px; }
.lay-s { width: 24px; height: 24px; flex: none; }
.pl-lay { justify-content: flex-start; padding-left: 132px; }

.wheels { display: flex; flex-direction: column; align-items: center; gap: 8px; margin-left: 4px; width: 24px; flex: none; }
.wheel { display: block; width: 20px; height: 24px; margin-top: 2px; border-radius: 50%; background: conic-gradient(#e05050, #e6a23c, #d8cf4a, #55b060, #3f8fd6, #8a5cc8, #e05050); }
.prop-combos { margin-left: 5px; display: flex; flex-direction: column; gap: 5px; flex: none; }
.c25, .c26 { width: 168px; height: 26px; }
.c25 { height: 25px; }
.sw-gray { background: #8f95a2; border: 0; margin-left: 12px; }
.bylayer { color: #697080; font-size: 15px; white-space: nowrap; }
.bylayer.lit { color: #a6acb7; margin-left: 15px; }
.pline { display: block; width: 80px; height: 1px; background: #c0c4cb; margin: 0 3px 0 2px; flex: none; }
.pl-prop { position: relative; padding-right: 18px; }
.launch { position: absolute; right: 5px; top: 8px; width: 7px; height: 7px; }
.grpi { height: 38px; }
.grp-active { width: 29px; height: 27px; margin-top: -2px; margin-left: -2px; padding-left: 3px; border: 1px solid #5e9bc2; background: #3e5870; }
.ruler { display: block; width: 36px; height: 9px; margin: 16px 0 16px; background: repeating-linear-gradient(90deg, #7a808d 0 2px, #5a606d 2px 3px); }
.tl-ruler { margin-top: 4px; }
.pl-utl { justify-content: flex-start; padding-left: 8px; }
.clipi { width: 32px; }
.viewi { width: 40px; height: 32px; margin-top: 4px; }
.tl-view { margin-top: 9px; }
.solo { border-top-color: #c0c4cb; }

.filetabs { height: 38px; display: flex; align-items: flex-end; padding-left: 28px; background: #21252f; border-bottom: 4px solid #3a4150; flex: none; gap: 2px; }
.ftab { height: 30px; width: 155px; background: #2a2f3a; border-radius: 8px 8px 0 0; color: #b9bdc5; line-height: 30px; padding-left: 14px; font-size: 14px; }
.ftab.current { width: 148px; background: #3a4150; color: #fff; font-weight: 700; font-size: 15px; padding-left: 12px; white-space: nowrap; }
.ftab.current b { margin-left: 13px; color: #aeb3bb; font-size: 15px; font-weight: 700; }
.ftab.plus { width: 27px; margin-left: 10px; padding: 0; text-align: center; font-size: 18px; color: #aeb3bb; }

.popout { position: absolute; left: 433px; top: 213px; width: 287px; height: 145px; background: #3a404f; z-index: 3; padding-top: 3px; display: flex; flex-direction: column; }
.pop-row { display: flex; align-items: center; height: 26px; margin-bottom: 5px; padding-left: 4px; }
.pop-row:nth-child(3) { margin-bottom: 4px; }
.pop-ic { width: 26px; height: 22px; flex: none; color: #6a7080; }
.pop-a { font: 700 20px/22px "Liberation Sans", sans-serif; }
.pop-box { position: relative; width: 248px; height: 26px; margin-left: 7px; background: #4a5263; color: #6e7585; line-height: 26px; padding-left: 2px; font-size: 15px; flex: none; }
.pop-box .caret { position: absolute; right: 5px; top: 10px; }
.pop-foot { display: flex; align-items: center; height: 23px; margin-top: -4px; }
.pin { width: 20px; height: 22px; background: #3f5f7c; border: 1px solid #72a9cf; display: flex; align-items: center; justify-content: center; flex: none; }
.pin i { display: block; width: 10px; height: 10px; border-radius: 50%; background: #d8dadd; }
.pop-label { margin-left: 110px; color: #e6e8ec; font-size: 15px; }

/* canvas */
.canvas { position: relative; flex: 1; min-height: 0; }
.viewlabel { padding: 4px 0 0 5px; color: #d0d3d8; font-size: 15px; line-height: 20px; letter-spacing: .7px; white-space: nowrap; }
.drawing { position: absolute; left: -2px; top: -252px; width: 1608px; height: 1030px; pointer-events: none; }
.draw-one { font: 52px "Liberation Sans", sans-serif; fill: #fff; }
.ucs { font: 22px "Liberation Sans", sans-serif; fill: #dfe1e5; }
.cmd { position: absolute; left: 310px; top: 670px; width: 983px; height: 67px; display: flex; }
.cmd-grip { width: 31px; display: flex; flex-direction: column; align-items: center; background: #2b303b; flex: none; }
.dots { display: block; width: 22px; height: 6px; margin-top: 5px; background: repeating-linear-gradient(90deg, #b8bbc1 0 2px, transparent 2px 4px); }
.cmd-x { width: 12px; height: 12px; margin-top: 13px; }
.cmd-w { width: 20px; height: 20px; margin-top: 12px; }
.cmd-main { flex: 1; display: flex; flex-direction: column; }
.cmd-log { height: 42px; background: #9a9b9d; border-bottom: 1px solid #222; color: #111; font: 15px/18px "Liberation Mono", "Noto Sans CJK SC", monospace; padding: 3px 0 0 3px; }
.cmd-input { flex: 1; background: #bbbcbe; display: flex; align-items: center; padding-left: 5px; color: #111; font: 14.500px "Liberation Mono", monospace; position: relative; }
.cmd-ic { width: 20px; height: 20px; flex: none; }
.cmd-car { border-top-color: #55585e; margin: 0 1px 0 4px; }
.cmd-up { width: 0; height: 0; border-left: 5px solid transparent; border-right: 5px solid transparent; border-bottom: 6px solid #555; margin-left: auto; margin-right: 4px; }
.watermark { position: absolute; left: 1464px; top: 628px; display: flex; color: #8b909b; font-size: 46px; line-height: 1; }
.watermark span:nth-child(2) { margin-top: 22px; margin-left: -4px; }
.watermark span:nth-child(3) { margin-top: 44px; margin-left: 2px; }
.flake { position: absolute; left: 95px; top: 14px; width: 26px; height: 26px; }

/* dialog */
.dialog { position: absolute; left: 1px; top: 127px; width: 618px; height: 391px; background: #f0f0f0; color: #222; display: flex; flex-direction: column; z-index: 4; font: 13.330px "Liberation Mono", "Noto Sans CJK SC", monospace; }
.cn { font-family: "Noto Sans CJK SC", sans-serif; font-size: 15px; }
.dlg-title { height: 37px; background: #fff; display: flex; align-items: center; padding-left: 12px; flex: none; }
.dlg-logo { width: 15px; height: 15px; flex: none; }
.dlg-name { margin-left: 7px; font: 15px "Noto Sans CJK SC", sans-serif; color: #222; }
.dlg-x { width: 13px; height: 13px; margin-left: auto; margin-right: 15px; }
.dlg-body { flex: 1; padding: 10px 12px 0 12px; display: flex; flex-direction: column; }
.dlg-current { height: 20px; line-height: 19px; white-space: nowrap; }
.dlg-main { display: flex; gap: 7px; height: 250px; }
.dlg-left { width: 201px; display: flex; flex-direction: column; flex: none; }
.dlg-mid { width: 266px; flex: none; display: flex; flex-direction: column; }
.dlg-right { width: 107px; margin-left: 5px; margin-top: 18px; display: flex; flex-direction: column; gap: 12px; flex: none; }
.dlg-cap { height: 21px; line-height: 19px; white-space: nowrap; flex: none; }
.cap-list { height: 22px; line-height: 18px; }
.listbox { height: 186px; background: #fff; border: 1px solid #a0a0a0; padding: 4px 0 0 7px; flex: none; }
.li { display: flex; align-items: center; height: 20px; gap: 5px; white-space: nowrap; }
.anno { width: 14px; height: 15px; flex: none; }
.li.sel { padding-left: 19px; }
.li.sel span { background: #0078d7; color: #fff; padding: 3px 4px; margin-left: -1px; line-height: 15px; width: 72px; }
.select { height: 22px; background: #e1e1e1; border: 1px solid #c4c4c4; display: flex; align-items: center; padding: 0 5px 0 3px; flex: none; }
.chev { width: 10px; height: 6px; margin-left: auto; }
.preview { position: relative; width: 266px; height: 228px; background: #212530; flex: none; }
.pv-svg { display: block; width: 266px; height: 228px; }
.pv-text { position: absolute; left: 151px; top: 51px; color: #fff; font: 700 26px/36px "Noto Sans CJK SC", sans-serif; white-space: nowrap; }
.btn, .btn2 { font: 13.330px "Liberation Mono", "Noto Sans CJK SC", monospace; background: #e1e1e1; border: 1px solid #adadad; color: #222; padding: 0; white-space: nowrap; }
.btn { width: 107px; height: 22px; flex: none; }
.btn.off { background: #cccccc; border-color: #bfbfbf; color: #858585; }
.dlg-foot { display: flex; justify-content: flex-end; gap: 6px; margin-top: 38px; padding-right: 4px; }
.btn2 { width: 98px; height: 22px; }
.btn2.primary { border: 2px solid #0078d7; }
.cursor { position: absolute; left: 442px; top: 178px; width: 13px; height: 20px; z-index: 5; }

/* bottom */
.bottombar { height: 39px; display: flex; justify-content: space-between; align-items: flex-start; padding-left: 16px; flex: none; }
.layouts { display: flex; border-top: 1px solid #3a404b; width: 982px; height: 26px; gap: 2px; }
.ltab { width: 61px; height: 23px; background: #2a2f3a; border-radius: 0 0 7px 7px; text-align: center; line-height: 22px; font-size: 14px; color: #a5a9b1; }
.ltab.on { background: #3a4150; color: #fff; font-weight: 700; }
.ltab:nth-child(3) { margin-left: 8px; }
.ltab.add { width: 24px; margin-left: 9px; font-size: 16px; }
.status { display: flex; align-items: center; gap: 3px; height: 35px; padding-right: 9px; border-top: 1px solid #3a404b; }
.coords { background: #2f3541; height: 32px; line-height: 32px; width: 222px; text-align: right; padding-right: 6px; font-size: 14px; color: #e3e5e9; white-space: nowrap; margin-right: 3px; }
.sgroup { display: flex; align-items: center; background: #2f3541; height: 32px; }
.sg1 { gap: 11px; padding: 0 4px 0 1px; }
.sg2 { gap: 10px; padding: 0 5px 0 6px; }
.st { width: 20px; height: 20px; flex: none; }
.globe { width: 26px; height: 30px; margin: 0 3px; }
.st-menu { margin-left: 8px; }
.st-active { width: 28px; height: 30px; background: #5b8dc4; display: flex; align-items: center; justify-content: center; flex: none; }
.st-active .st { height: 24px; }

/* spreadsheet */
.sheet { width: 312px; height: 1030px; display: flex; flex-direction: column; background: #f2f2f2; overflow: hidden; border-top: 3px solid #0b3f9a; color: #111; }
.x-tabs { height: 50px; display: flex; align-items: flex-end; background: #f0f2f3; flex: none; }
.x-home { width: 48px; height: 35px; background: #5a85f0; border-radius: 0 6px 0 0; color: #fff; font-size: 15px; line-height: 35px; flex: none; }
.x-file { margin-left: 6px; flex: 1; height: 35px; display: flex; align-items: center; padding-left: 9px; border-top: 1px solid #d9dbdc; border-left: 1px solid #d9dbdc; background: #f5f6f7; }
.x-s { width: 20px; height: 20px; background: #2fae7a; color: #fff; text-align: center; font: 700 16px/20px "Liberation Sans", sans-serif; flex: none; }
.x-name { margin-left: 8px; color: #4a9a5a; font-size: 15px; white-space: nowrap; }
.x-tools { height: 46px; display: flex; align-items: center; padding-left: 2px; background: #f3f4f5; flex: none; }
.x-filemenu { font-size: 15px; color: #333; flex: none; }
.x-sep { display: block; width: 1px; height: 24px; background: #dcdcdc; margin-left: 11px; flex: none; }
.sep2 { margin-left: 12px; }
.x-ic { width: 19px; height: 19px; margin-left: 10px; flex: none; }
.x-ic:nth-of-type(1) { margin-left: 11px; }
.x-down { width: 12px; height: 12px; margin-left: 14px; flex: none; }
.x-start { margin-left: 6px; padding: 0 14px; height: 26px; line-height: 26px; border-radius: 13px 0 0 13px; background: #4aa64e; color: #fff; font-weight: 700; font-size: 14px; white-space: nowrap; flex: 1; }
.x-formula { height: 53px; background: #ebecec; display: flex; align-items: center; flex: none; }
.x-namebox { width: 153px; height: 27px; background: #fff; border-radius: 0 6px 6px 0; display: flex; align-items: center; padding-left: 36px; font: 14px "Liberation Mono", monospace; color: #444; flex: none; position: relative; }
.x-namebox i { position: absolute; right: 3px; top: 12px; border-left: 3px solid transparent; border-right: 3px solid transparent; border-top: 4px solid #888; }
.x-zoom { width: 20px; height: 20px; margin-left: 54px; flex: none; }
.x-fx { font: italic 22px "Liberation Serif", serif; color: #444; margin-left: 11px; flex: none; }
.x-input { margin-left: 9px; flex: 1; height: 27px; background: #fff; border-radius: 6px 0 0 6px; padding-left: 17px; font: 14px/28px "Liberation Mono", monospace; }
.x-colhead { height: 29px; background: #cfd0d0; border-bottom: 3px solid #5a9a5a; flex: none; }
.x-colhead span { display: block; width: 58px; height: 26px; text-align: center; color: #5aa05f; font-size: 16px; line-height: 26px; border-right: 1px solid #bbb; }
.x-rows { flex: 1; overflow: hidden; min-height: 0; }
.xrow { height: 55px; display: grid; grid-template-columns: 59px 1fr; border-bottom: 1px solid #111; background: #f3f3f4; font-size: 18px; align-items: center; }
.xrow i { display: block; height: 55px; margin-bottom: -1px; background: #fff; border-right: 1px solid #111; border-bottom: 1px solid #d8d8d8; }
.xrow span { padding-left: 3px; white-space: nowrap; }
.xrow.xrow-top { margin-top: -25px; }
.xrow.short { height: 53px; }
.xrow.short i { height: 53px; }
.xred { height: 63px; background: #be3a3d; color: #fff; font-size: 25px; text-align: center; line-height: 64px; white-space: nowrap; }
.navy { background: #435069; color: #fff; }
.navy i { background: #3c619f; color: #fff; font: 20px/55px "Liberation Sans", sans-serif; text-align: center; border-bottom-color: #111; }
.type { height: 57px; background: #3c4a68; border-top: 2px solid #5a9a5a; border-bottom: 3px solid #4f9a50; }
.type i { height: 52px; margin: 0; line-height: 52px; border-bottom: 0; }
.type span { color: #c4c9d4; }
.x-sheets { height: 27px; display: flex; align-items: stretch; background: #ececec; flex: none; }
.x-back { width: 10px; height: 18px; margin: 5px 0 0 11px; flex: none; }
.x-st { display: block; line-height: 27px; font-size: 14px; white-space: nowrap; text-align: center; flex: none; }
.t2 { width: 82px; margin-left: 86px; background: #c9c9c9; color: #444; }
.t3 { flex: 1; background: #fff; color: #2e9a3c; font-weight: 700; text-align: left; padding-left: 20px; }
.x-status { height: 28px; line-height: 28px; padding-left: 21px; background: #f2f2f2; color: #666; font-size: 14px; flex: none; white-space: nowrap; }

/* taskbar */
.taskbar { height: 50px; position: relative; display: flex; align-items: stretch; background: linear-gradient(90deg, #223a48, #1f3546 50%, #17293d); flex: none; }
.wm-box { position: absolute; left: 12px; top: 0; width: 36px; height: 38px; border-radius: 8px; background: rgba(150,160,165,.55); }
.winlogo { position: absolute; left: 9px; top: 13px; width: 20px; height: 20px; }
.wm-text { position: absolute; left: 58px; top: 6px; font: 700 33px/38px "Liberation Sans", sans-serif; letter-spacing: 2px; color: rgba(150,160,165,.42); }
.apps { display: flex; margin-left: 68px; position: relative; gap: 6px; }
.app { width: 52px; border-bottom: 3px solid #7fb7e6; display: flex; align-items: center; justify-content: center; }
.app.active { width: 61px; background: #3f5866; }
.app:nth-child(4) { margin-left: 5px; }
.ico { width: 29px; height: 29px; border-radius: 4px; text-align: center; font: 700 26px/29px "Liberation Sans", sans-serif; color: #fff; display: block; }
.ico-green { background: #55a820; }
.ico-a { background: #f4eeee; color: #c0272e; border-radius: 0; }
.ico-w { background: #2f83ea; font-size: 18px; border-radius: 6px; }
.ico-c { background: #f2553d; }
.tray { margin-left: auto; display: flex; align-items: center; padding-right: 31px; }
.tr { width: 18px; height: 22px; margin-right: 12px; flex: none; }
.eng { font-size: 14px; color: #e4e8ec; }
.notif { width: 21px; height: 22px; margin: 0 0 0 24px; }
```
